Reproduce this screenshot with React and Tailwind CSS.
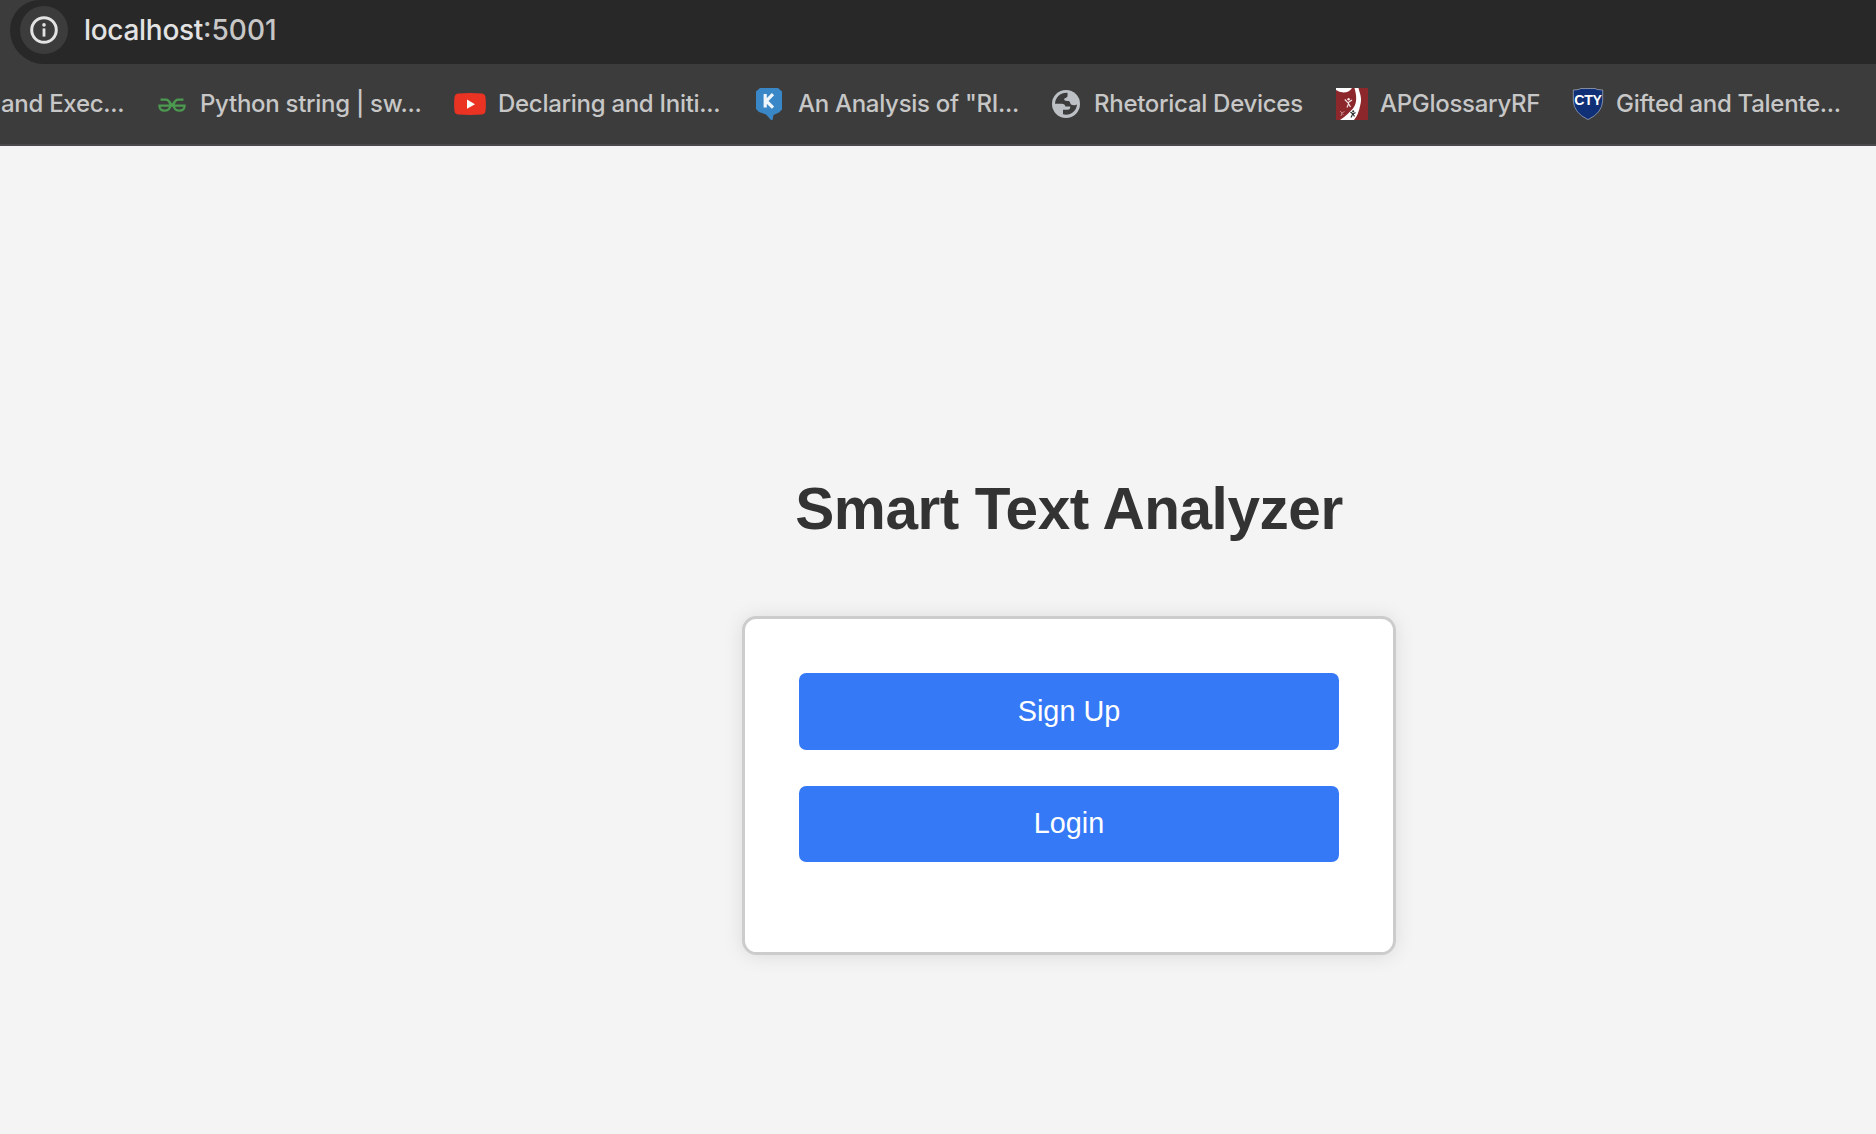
function InfoIcon() {
  return (
    <svg className="size-7" viewBox="0 0 28 28" fill="none">
      <circle cx="14" cy="14" r="12.3" stroke="#e3e3e3" strokeWidth="3" />
      <rect x="12.6" y="12.4" width="2.8" height="8.2" fill="#e3e3e3" />
      <circle cx="14" cy="8.9" r="1.8" fill="#e3e3e3" />
    </svg>
  );
}

function GeeksIcon() {
  return (
    <svg className="h-8 w-8" viewBox="0 0 32 32" fill="none" stroke="#4b9a50" strokeWidth="2.2">
      <path d="M4.5 11.6H9.5Q13.3 11.6 14.2 16.4Q14.4 22.6 8.8 22.6Q3.3 22.6 3.4 17.6H28.6Q28.7 22.6 23.2 22.6Q17.6 22.6 17.8 16.4Q18.7 11.6 22.5 11.6H27.5" />
      <path d="M13.2 13.2L18.8 20.6M18.8 13.2L13.2 20.6" strokeWidth="1.6" />
    </svg>
  );
}

function YouTubeIcon() {
  return (
    <svg className="h-8 w-8" viewBox="0 0 32 32">
      <path d="M4.5 5.4Q16 4.6 27.5 5.4Q31 5.7 31.5 9Q32.2 16 31.5 23Q31 26.3 27.5 26.6Q16 27.4 4.5 26.6Q1 26.3 0.5 23Q-0.2 16 0.5 9Q1 5.7 4.5 5.4Z" fill="#ea3323" />
      <path d="M13 11.6L21 16.2L13 20.8Z" fill="#fff" />
    </svg>
  );
}

function KIcon() {
  return (
    <svg className="h-8 w-8" viewBox="0 0 32 32">
      <path d="M7 0H25L29 3.5V21.5L26 24.5L20.5 27L19.5 32H18L13 26.5L6 24L3 21V3.5Z" fill="#3a87c8" />
      <path d="M12.2 6V19.5M20 6.2L13.2 13L20 19.7" fill="none" stroke="#eef6fc" strokeWidth="3.2" />
    </svg>
  );
}

function GlobeIcon() {
  return (
    <svg className="h-8 w-8" viewBox="0 0 32 32">
      <circle cx="16" cy="16" r="14" fill="#bdc1c6" />
      <path
        d="M17.6 4.9C10.8 4.3 5.4 9.2 5 15.7H11.8C13.9 15.7 15.2 16.7 15.4 18.6H20.2C20.4 20.8 19.5 21.7 17.6 21.8H13V26.3C20.2 28 26.6 23.3 27 16.2C25.7 17.4 22.5 17.5 21 16.4C20 15.6 20.4 13.8 19.2 13.2C17.5 12.9 14.6 13.4 14.2 11.6C13.9 9.7 17.3 10.2 17.5 8Z"
        fill="#3c3c3c"
      />
    </svg>
  );
}

function GlossaryIcon() {
  return (
    <svg className="h-8 w-8" viewBox="0 0 32 32">
      <rect width="32" height="32" fill="#8c272b" />
      <path d="M0 0H16Q13 4.5 7.5 4.5Q3 4.3 0 2Z" fill="#fff" />
      <path d="M18.5 0H22.5C24 6 26 10 24.5 16Q22.5 27 18 32H4C10 28 14 23.5 17 20.5C21.5 15 20.5 7 18.5 0Z" fill="#fff" />
      <path d="M8.8 11.5L12 14.8L16 12M12.2 14L12.5 16L11 19.5M12.8 16L14.5 19" fill="none" stroke="#f4e6e6" strokeWidth="1.2" />
      <circle cx="12.6" cy="11.3" r="1.2" fill="#f4e6e6" />
      <path d="M4 23L6 25L8.5 23.5M6 24.5L5 28M6.2 25.5L7.5 27" fill="none" stroke="#c98f91" strokeWidth=".9" />
      <path d="M14.5 24L17 26L19.5 24.5M17 25.5L15 29.5M17 26L18.5 28.5" fill="none" stroke="#303030" strokeWidth="1.2" />
      <circle cx="17.2" cy="23.3" r="1.1" fill="#303030" />
    </svg>
  );
}

function ShieldIcon() {
  return (
    <svg className="h-8 w-8" viewBox="0 0 32 32">
      <path d="M1.3 2Q7 2 9 .5H23Q25 2 30.7 2V13Q30 25 16 31.6Q2 25 1.3 13Z" fill="#0f2f76" stroke="#a9b1c4" strokeWidth=".7" />
      <text x="16" y="16.5" textAnchor="middle" textLength="27.5" lengthAdjust="spacingAndGlyphs" fill="#fff" fontFamily="'Liberation Sans', sans-serif" fontWeight="700" fontSize="15.5">
        CTY
      </text>
    </svg>
  );
}

const bookmarks = [
  { label: "Python string | sw...", Icon: GeeksIcon, width: "w-[298px]", gap: "gap-[12px]" },
  { label: "Declaring and Initi...", Icon: YouTubeIcon, width: "w-[299px]", gap: "gap-[12px]" },
  { label: 'An Analysis of "RI...', Icon: KIcon, width: "w-[297px]", gap: "gap-[13px]" },
  { label: "Rhetorical Devices", Icon: GlobeIcon, width: "w-[286px]", gap: "gap-[12px]" },
  { label: "APGlossaryRF", Icon: GlossaryIcon, width: "w-[236px]", gap: "gap-[12px]" },
  { label: "Gifted and Talente...", Icon: ShieldIcon, width: "w-[304px]", gap: "gap-[12px]" },
];

export default function App() {
  return (
    <div className="flex h-[1134px] w-[1876px] flex-col overflow-hidden bg-[#f4f4f4]">
      <header className="h-[146px] shrink-0 border-b-2 border-[#4a484a] bg-[#3c3c3c] font-['Inter',sans-serif] font-[450]">
        <div className="ml-[10px] flex h-16 items-center rounded-bl-[34px] rounded-tl-[30px] bg-[#282828] pb-1 pl-[10px]">
          <div className="flex size-12 items-center justify-center rounded-full bg-[#3c3c3c]">
            <InfoIcon />
          </div>
          <p className="ml-[16px] whitespace-nowrap text-[28px] leading-9 tracking-[-0.3px] text-[#e3e3e3]">
            localhost<span className="tracking-[0px] text-[#c7c7c7]">:5001</span>
          </p>
        </div>
        <nav className="flex h-20 items-center whitespace-nowrap text-[24px] leading-8 tracking-[-0.29px] text-[#c7c7c7]">
          <span className="w-[156px] shrink-0 pl-[1px]">and Exec...</span>
          {bookmarks.map(({ label, Icon, width, gap }) => (
            <a key={label} className={`flex shrink-0 items-center ${width} ${gap}`}>
              <Icon />
              <span>{label}</span>
            </a>
          ))}
        </nav>
      </header>
      <main className="flex flex-1 flex-col items-center pl-[262px] pt-[330px] font-['Liberation_Sans',Arial,sans-serif]">
        <h1 className="whitespace-nowrap text-[58.5px] font-bold leading-[66px] tracking-[-0.45px] text-[#333333]">Smart Text Analyzer</h1>
        <section className="mt-[74px] flex h-[339px] w-[654px] flex-col gap-9 rounded-[14.4px] border-[3px] border-[#cccccc] bg-white px-[54px] pt-[54px] shadow-[0_1px_20px_rgba(0,0,0,0.1)]">
          <button className="h-[77px] rounded-[7.2px] bg-[#3579f6] pb-[2px] text-[28.8px] leading-8 text-white">Sign Up</button>
          <button className="h-[76px] rounded-[7.2px] bg-[#3579f6] pb-[2px] text-[28.8px] leading-8 text-white">Login</button>
        </section>
      </main>
    </div>
  );
}
